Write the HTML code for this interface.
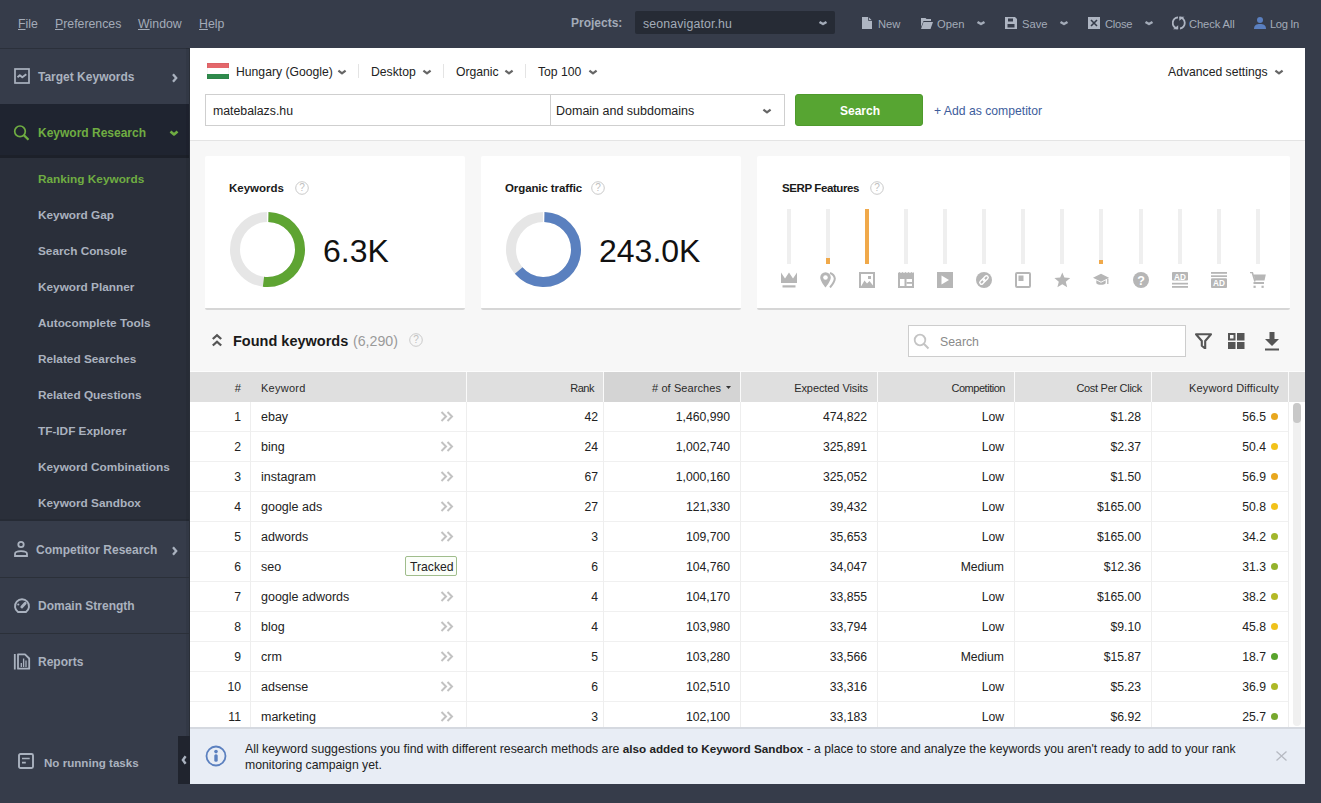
<!DOCTYPE html>
<html><head><meta charset="utf-8">
<style>
*{box-sizing:border-box;margin:0;padding:0}
html,body{width:1321px;height:803px;overflow:hidden;background:#363c4a;font-family:"Liberation Sans",sans-serif;position:relative}
.t{position:absolute;line-height:20px;white-space:nowrap}
.t u{text-decoration:underline;text-underline-offset:1px}
.r{position:absolute;display:block}
</style></head><body>
<div class='r' style='left:0px;top:0px;width:1321px;height:803px;background:#363c4a;'></div>
<div class='t ' style='left:18px;top:13.74px;font-size:12.3px;font-weight:400;color:#a3abb8;'><u>F</u>ile</div>
<div class='t ' style='left:55px;top:13.74px;font-size:12.3px;font-weight:400;color:#a3abb8;'><u>P</u>references</div>
<div class='t ' style='left:138px;top:13.74px;font-size:12.3px;font-weight:400;color:#a3abb8;'><u>W</u>indow</div>
<div class='t ' style='left:199px;top:13.74px;font-size:12.3px;font-weight:400;color:#a3abb8;'><u>H</u>elp</div>
<div class='t ' style='left:571px;top:12.84px;font-size:12px;font-weight:700;color:#a3abb8;'>Projects:</div>
<div class='r' style='left:635px;top:11px;width:200px;height:23px;background:#262b35;border-radius:2px'></div>
<div class='t ' style='left:643px;top:13.74px;font-size:12.3px;font-weight:400;color:#a3abb8;letter-spacing:0.15px'>seonavigator.hu</div>
<svg class='r' style='left:817.0px;top:17.0px;' width='12' height='12' viewBox='0 0 12 12'><polyline points='2.5,4.9 6.0,7.1 9.5,4.9' fill='none' stroke='#a3abb8' stroke-width='2.4' stroke-linejoin='round'/></svg>
<svg class='r' style='left:862px;top:17px;' width='10' height='12' viewBox='0 0 10 12'><path d='M0 0H6.5L10 3.5V12H0Z' fill='#aeb5c2'/><path d='M6.5 0V3.5H10' fill='none' stroke='#363c4a' stroke-width='0.8'/></svg>
<div class='t ' style='left:878px;top:14.12px;font-size:11.2px;font-weight:400;color:#a3abb8;'>New</div>
<svg class='r' style='left:921px;top:18px;' width='12' height='11' viewBox='0 0 12 11'><path d='M0 0H4.5L5.5 1H10V3H2.5L0 9Z' fill='#aeb5c2'/><path d='M2.5 4H12L9.5 11H0Z' fill='#aeb5c2'/></svg>
<div class='t ' style='left:937px;top:14.12px;font-size:11.2px;font-weight:400;color:#a3abb8;'>Open</div>
<svg class='r' style='left:975.0px;top:17.0px;' width='12' height='12' viewBox='0 0 12 12'><polyline points='2.5,4.9 6.0,7.1 9.5,4.9' fill='none' stroke='#a3abb8' stroke-width='2.4' stroke-linejoin='round'/></svg>
<svg class='r' style='left:1005px;top:17px;' width='12' height='12' viewBox='0 0 12 12'><path d='M0 0H10L12 2V12H0Z' fill='#aeb5c2'/><rect x='3' y='1.5' width='5' height='3' fill='#363c4a'/><rect x='2.5' y='7' width='7' height='3.5' fill='#363c4a'/></svg>
<div class='t ' style='left:1022px;top:14.12px;font-size:11.2px;font-weight:400;color:#a3abb8;'>Save</div>
<svg class='r' style='left:1058.0px;top:17.0px;' width='12' height='12' viewBox='0 0 12 12'><polyline points='2.5,4.9 6.0,7.1 9.5,4.9' fill='none' stroke='#a3abb8' stroke-width='2.4' stroke-linejoin='round'/></svg>
<svg class='r' style='left:1088px;top:17px;' width='12' height='12' viewBox='0 0 12 12'><rect width='12' height='12' fill='#aeb5c2'/><path d='M3 3L9 9M9 3L3 9' stroke='#363c4a' stroke-width='1.6'/></svg>
<div class='t ' style='left:1105px;top:14.12px;font-size:11.2px;font-weight:400;color:#a3abb8;letter-spacing:-0.3px'>Close</div>
<svg class='r' style='left:1143.0px;top:17.0px;' width='12' height='12' viewBox='0 0 12 12'><polyline points='2.5,4.9 6.0,7.1 9.5,4.9' fill='none' stroke='#a3abb8' stroke-width='2.4' stroke-linejoin='round'/></svg>
<svg class='r' style='left:1172px;top:16px;' width='14' height='14' viewBox='0 0 14 14'><path d='M6 1.5A5 5.5 0 0 0 5.5 12.5' fill='none' stroke='#aeb5c2' stroke-width='1.8'/><path d='M1 13.2H6.2V9.2Z' fill='#aeb5c2'/><path d='M7.5 1.5A5 5.5 0 0 1 8 12.5' fill='none' stroke='#aeb5c2' stroke-width='1.8'/><path d='M7.3 0.8H12.5L7.3 4.8Z' fill='#aeb5c2'/></svg>
<div class='t ' style='left:1189px;top:14.12px;font-size:11.2px;font-weight:400;color:#a3abb8;letter-spacing:-0.12px'>Check All</div>
<svg class='r' style='left:1254px;top:17px;' width='12' height='12' viewBox='0 0 12 12'><circle cx='6' cy='3' r='3' fill='#5a7fbf'/><path d='M0 12C0 8 2.5 7 6 7S12 8 12 12Z' fill='#5a7fbf'/></svg>
<div class='t ' style='left:1270px;top:14.12px;font-size:11.2px;font-weight:400;color:#a3abb8;letter-spacing:-0.4px'>Log In</div>
<div class='r' style='left:0px;top:48px;width:190px;height:755px;background:#363c4a;'></div>
<div class='r' style='left:0px;top:48px;width:189px;height:56px;background:#363c4a;'></div>
<div class='r' style='left:0px;top:104px;width:189px;height:51px;background:#1f2430;'></div>
<div class='r' style='left:0px;top:155px;width:189px;height:4px;background:#1c2029;'></div>
<div class='r' style='left:0px;top:158px;width:189px;height:362px;background:#2a2f3a;'></div>
<div class='r' style='left:0px;top:519px;width:189px;height:2px;background:#262b35;'></div>
<div class='r' style='left:0px;top:48px;width:189px;height:1px;background:#2b303b;'></div>
<div class='r' style='left:186px;top:48px;width:3px;height:736px;background:rgba(0,0,0,0.06);'></div>
<div class='r' style='left:189px;top:48px;width:1px;height:736px;background:#2a2f38;'></div>
<svg class='r' style='left:14px;top:68px;' width='16' height='16' viewBox='0 0 16 16'><rect x='1' y='1' width='14' height='14' fill='none' stroke='#aab2bf' stroke-width='1.7'/><polyline points='3.5,9.3 5.8,7.3 8.3,9.3 12.3,6.3' fill='none' stroke='#aab2bf' stroke-width='1.9' stroke-linejoin='round'/></svg>
<div class='t ' style='left:38px;top:66.84px;font-size:12px;font-weight:700;color:#aab2bf;'>Target Keywords</div>
<svg class='r' style='left:171px;top:73px;' width='7' height='10' viewBox='0 0 7 10'><polyline points='2,1.3 5.2,5 2,8.7' fill='none' stroke='#aab2bf' stroke-width='2.3'/></svg>
<svg class='r' style='left:13px;top:124px;' width='18' height='18' viewBox='0 0 18 18'><circle cx='7' cy='7.3' r='5.3' fill='none' stroke='#6fad42' stroke-width='1.7'/><path d='M10.8 11.1L15.5 15.8' stroke='#6fad42' stroke-width='2.2'/></svg>
<div class='t ' style='left:38px;top:122.84px;font-size:12px;font-weight:700;color:#6fad42;'>Keyword Research</div>
<svg class='r' style='left:168.0px;top:127.0px;' width='12' height='12' viewBox='0 0 12 12'><polyline points='2.5,4.5 6.0,7.5 9.5,4.5' fill='none' stroke='#6fad42' stroke-width='2.6' stroke-linejoin='round'/></svg>
<div class='t ' style='left:38px;top:168.91px;font-size:11.8px;font-weight:700;color:#6fad42;'>Ranking Keywords</div>
<div class='t ' style='left:38px;top:204.91px;font-size:11.8px;font-weight:700;color:#aab2bf;'>Keyword Gap</div>
<div class='t ' style='left:38px;top:240.91px;font-size:11.8px;font-weight:700;color:#aab2bf;'>Search Console</div>
<div class='t ' style='left:38px;top:276.91px;font-size:11.8px;font-weight:700;color:#aab2bf;'>Keyword Planner</div>
<div class='t ' style='left:38px;top:312.91px;font-size:11.8px;font-weight:700;color:#aab2bf;'>Autocomplete Tools</div>
<div class='t ' style='left:38px;top:348.91px;font-size:11.8px;font-weight:700;color:#aab2bf;'>Related Searches</div>
<div class='t ' style='left:38px;top:384.91px;font-size:11.8px;font-weight:700;color:#aab2bf;'>Related Questions</div>
<div class='t ' style='left:38px;top:420.91px;font-size:11.8px;font-weight:700;color:#aab2bf;'>TF-IDF Explorer</div>
<div class='t ' style='left:38px;top:456.91px;font-size:11.8px;font-weight:700;color:#aab2bf;'>Keyword Combinations</div>
<div class='t ' style='left:38px;top:492.91px;font-size:11.8px;font-weight:700;color:#aab2bf;'>Keyword Sandbox</div>
<div class='r' style='left:0px;top:577px;width:189px;height:1px;background:#2b3039;'></div>
<div class='r' style='left:0px;top:633px;width:189px;height:1px;background:#2b3039;'></div>
<svg class='r' style='left:13px;top:540px;' width='16' height='17' viewBox='0 0 16 17'><circle cx='8' cy='4.5' r='2.7' fill='none' stroke='#aab2bf' stroke-width='1.8'/><path d='M2 16V14C2 11.5 4.5 11.2 8 11.2S14 11.5 14 14V16Z' fill='none' stroke='#aab2bf' stroke-width='1.8'/></svg>
<div class='t ' style='left:36px;top:539.84px;font-size:12px;font-weight:700;color:#aab2bf;'>Competitor Research</div>
<svg class='r' style='left:171px;top:546px;' width='7' height='10' viewBox='0 0 7 10'><polyline points='2,1.3 5.2,5 2,8.7' fill='none' stroke='#aab2bf' stroke-width='2.3'/></svg>
<svg class='r' style='left:13px;top:597px;' width='18' height='17' viewBox='0 0 18 17'><path d='M5 15A7 7 0 1 1 13 15Z' fill='none' stroke='#aab2bf' stroke-width='1.9' stroke-linejoin='round'/><path d='M8.8 10L12.2 6.2' stroke='#aab2bf' stroke-width='2.8' stroke-linecap='round'/><circle cx='5.3' cy='7.5' r='1.1' fill='#aab2bf'/></svg>
<div class='t ' style='left:38px;top:595.84px;font-size:12px;font-weight:700;color:#aab2bf;'>Domain Strength</div>
<svg class='r' style='left:13px;top:653px;' width='18' height='17' viewBox='0 0 18 17'><path d='M1.8 1V16.5' stroke='#aab2bf' stroke-width='1.8'/><path d='M5 1.3H12L16.2 5.5V15.7H5Z' fill='none' stroke='#aab2bf' stroke-width='1.8' stroke-linejoin='round'/><path d='M8.3 14V10M10.6 14V5.5M13 14V7.5' stroke='#aab2bf' stroke-width='1.3'/></svg>
<div class='t ' style='left:38px;top:651.84px;font-size:12px;font-weight:700;color:#aab2bf;'>Reports</div>
<svg class='r' style='left:18px;top:753px;' width='16' height='16' viewBox='0 0 16 16'><rect x='1' y='1' width='14' height='14' rx='1.5' fill='none' stroke='#aab2bf' stroke-width='1.9'/><path d='M4 5.5H11.7M4 9.6H7.8' stroke='#aab2bf' stroke-width='1.7'/></svg>
<div class='t ' style='left:44px;top:752.98px;font-size:11.6px;font-weight:700;color:#aab2bf;'>No running tasks</div>
<div class='r' style='left:178px;top:736px;width:12px;height:48px;background:#20242e;'></div>
<svg class='r' style='left:181px;top:755px;' width='6' height='10' viewBox='0 0 6 10'><polyline points='4.6,1.2 1.9,5 4.6,8.8' fill='none' stroke='#aab2bf' stroke-width='2.4'/></svg>
<div class='r' style='left:190px;top:48px;width:1115px;height:736px;background:#f7f7f7;'></div>
<div class='r' style='left:190px;top:48px;width:1115px;height:93px;background:#ffffff;'></div>
<div class='r' style='left:190px;top:140px;width:1115px;height:1px;background:#e4e4e4;'></div>
<div class='r' style='left:207px;top:63px;width:22px;height:5px;background:#e4676b;'></div>
<div class='r' style='left:207px;top:68px;width:22px;height:6px;background:#ffffff;'></div>
<div class='r' style='left:207px;top:74px;width:22px;height:5px;background:#2f8a4c;'></div>
<div class='r' style='left:207px;top:63px;width:22px;height:16px;background:transparent;box-shadow:inset 0 0 0 0.5px rgba(0,0,0,.08)'></div>
<div class='t ' style='left:236px;top:61.77px;font-size:12.2px;font-weight:400;color:#222;'>Hungary (Google)</div>
<svg class='r' style='left:336.0px;top:66.0px;' width='12' height='12' viewBox='0 0 12 12'><polyline points='2.4,4.6 6.0,7.4 9.6,4.6' fill='none' stroke='#666' stroke-width='2.2' stroke-linejoin='round'/></svg>
<div class='r' style='left:358px;top:64px;width:1px;height:14px;background:#e4e4e4;'></div>
<div class='t ' style='left:371px;top:61.77px;font-size:12.2px;font-weight:400;color:#222;'>Desktop</div>
<svg class='r' style='left:421.0px;top:66.0px;' width='12' height='12' viewBox='0 0 12 12'><polyline points='2.4,4.6 6.0,7.4 9.6,4.6' fill='none' stroke='#666' stroke-width='2.2' stroke-linejoin='round'/></svg>
<div class='r' style='left:443px;top:64px;width:1px;height:14px;background:#e4e4e4;'></div>
<div class='t ' style='left:456px;top:61.77px;font-size:12.2px;font-weight:400;color:#222;'>Organic</div>
<svg class='r' style='left:503.0px;top:66.0px;' width='12' height='12' viewBox='0 0 12 12'><polyline points='2.4,4.6 6.0,7.4 9.6,4.6' fill='none' stroke='#666' stroke-width='2.2' stroke-linejoin='round'/></svg>
<div class='r' style='left:525px;top:64px;width:1px;height:14px;background:#e4e4e4;'></div>
<div class='t ' style='left:538px;top:61.77px;font-size:12.2px;font-weight:400;color:#222;'>Top 100</div>
<svg class='r' style='left:587.0px;top:66.0px;' width='12' height='12' viewBox='0 0 12 12'><polyline points='2.4,4.6 6.0,7.4 9.6,4.6' fill='none' stroke='#666' stroke-width='2.2' stroke-linejoin='round'/></svg>
<div class='t ' style='left:1168px;top:61.77px;font-size:12.2px;font-weight:400;color:#222;'>Advanced settings</div>
<svg class='r' style='left:1272.5px;top:66.0px;' width='12' height='12' viewBox='0 0 12 12'><polyline points='2.4,4.6 6.0,7.4 9.6,4.6' fill='none' stroke='#666' stroke-width='2.2' stroke-linejoin='round'/></svg>
<div class='r' style='left:205px;top:94px;width:346px;height:32px;background:#fff;border:1px solid #cfcfcf'></div>
<div class='t ' style='left:213px;top:100.74px;font-size:12.3px;font-weight:400;color:#222;'>matebalazs.hu</div>
<div class='r' style='left:550px;top:94px;width:235px;height:32px;background:#fff;border:1px solid #cfcfcf'></div>
<div class='t ' style='left:556px;top:100.67px;font-size:12.5px;font-weight:400;color:#222;'>Domain and subdomains</div>
<svg class='r' style='left:761.0px;top:105.0px;' width='12' height='12' viewBox='0 0 12 12'><polyline points='2.4,4.6 6.0,7.4 9.6,4.6' fill='none' stroke='#666' stroke-width='2.2' stroke-linejoin='round'/></svg>
<div class='r' style='left:795px;top:94px;width:128px;height:32px;background:#57a532;border-radius:3px;border:1px solid #4e9a2c'></div>
<div class='t ' style='left:840px;top:100.84px;font-size:12px;font-weight:700;color:#fff;'>Search</div>
<div class='t ' style='left:934px;top:100.77px;font-size:12.2px;font-weight:400;color:#3d5d9c;'>+ Add as competitor</div>
<div class='r' style='left:205px;top:156px;width:260px;height:154px;background:#fff;border-radius:2px;border-bottom:2px solid #d6d6d6'></div>
<div class='r' style='left:481px;top:156px;width:260px;height:154px;background:#fff;border-radius:2px;border-bottom:2px solid #d6d6d6'></div>
<div class='r' style='left:757px;top:156px;width:533px;height:154px;background:#fff;border-radius:2px;border-bottom:2px solid #d6d6d6'></div>
<div class='t ' style='left:229px;top:178.02px;font-size:11.5px;font-weight:700;color:#1a1a1a;'>Keywords</div>
<svg class='r' style='left:295px;top:181px;' width='14' height='14' viewBox='0 0 14 14'><circle cx='7.0' cy='7.0' r='6.3' fill='none' stroke='#c9c9c9' stroke-width='1'/><text x='7.0' y='10.14' text-anchor='middle' font-family='Liberation Sans' font-size='10.1' fill='#c0c0c0'>?</text></svg>
<div class='t ' style='left:505px;top:178.02px;font-size:11.5px;font-weight:700;color:#1a1a1a;letter-spacing:-0.1px'>Organic traffic</div>
<svg class='r' style='left:591px;top:181px;' width='14' height='14' viewBox='0 0 14 14'><circle cx='7.0' cy='7.0' r='6.3' fill='none' stroke='#c9c9c9' stroke-width='1'/><text x='7.0' y='10.14' text-anchor='middle' font-family='Liberation Sans' font-size='10.1' fill='#c0c0c0'>?</text></svg>
<div class='t ' style='left:782px;top:178.02px;font-size:11.5px;font-weight:700;color:#1a1a1a;letter-spacing:-0.4px'>SERP Features</div>
<svg class='r' style='left:870px;top:181px;' width='14' height='14' viewBox='0 0 14 14'><circle cx='7.0' cy='7.0' r='6.3' fill='none' stroke='#c9c9c9' stroke-width='1'/><text x='7.0' y='10.14' text-anchor='middle' font-family='Liberation Sans' font-size='10.1' fill='#c0c0c0'>?</text></svg>
<svg class='r' style='left:228.5px;top:211.0px;' width='77.0' height='77.0' viewBox='0 0 77.0 77.0'><g transform='translate(38.5,38.5) rotate(-90)'><circle r='32.5' fill='none' stroke='#e6e6e6' stroke-width='10'/><circle r='32.5' fill='none' stroke='#5ea432' stroke-width='10' stroke-dasharray='105.16 204.20' transform='rotate(1.5)'/><path d='M22.5,0H42.5' stroke='#fff' stroke-width='1.2'/></g></svg>
<svg class='r' style='left:505.0px;top:211.0px;' width='77.0' height='77.0' viewBox='0 0 77.0 77.0'><g transform='translate(38.5,38.5) rotate(-90)'><circle r='32.5' fill='none' stroke='#e6e6e6' stroke-width='10'/><circle r='32.5' fill='none' stroke='#5a80bf' stroke-width='10' stroke-dasharray='129.26 204.20' transform='rotate(1.5)'/><path d='M22.5,0H42.5' stroke='#fff' stroke-width='1.2'/></g></svg>
<div class='t ' style='left:323px;top:240.91px;font-size:32px;font-weight:400;color:#111;'>6.3K</div>
<div class='t ' style='left:599px;top:240.91px;font-size:32px;font-weight:400;color:#111;'>243.0K</div>
<div class='r' style='left:787px;top:209px;width:4px;height:55px;background:#efefef;'></div>
<div class='r' style='left:826px;top:209px;width:4px;height:55px;background:#efefef;'></div>
<div class='r' style='left:865px;top:209px;width:4px;height:55px;background:#efefef;'></div>
<div class='r' style='left:904px;top:209px;width:4px;height:55px;background:#efefef;'></div>
<div class='r' style='left:943px;top:209px;width:4px;height:55px;background:#efefef;'></div>
<div class='r' style='left:982px;top:209px;width:4px;height:55px;background:#efefef;'></div>
<div class='r' style='left:1021px;top:209px;width:4px;height:55px;background:#efefef;'></div>
<div class='r' style='left:1060px;top:209px;width:4px;height:55px;background:#efefef;'></div>
<div class='r' style='left:1099px;top:209px;width:4px;height:55px;background:#efefef;'></div>
<div class='r' style='left:1139px;top:209px;width:4px;height:55px;background:#efefef;'></div>
<div class='r' style='left:1178px;top:209px;width:4px;height:55px;background:#efefef;'></div>
<div class='r' style='left:1217px;top:209px;width:4px;height:55px;background:#efefef;'></div>
<div class='r' style='left:1256px;top:209px;width:4px;height:55px;background:#efefef;'></div>
<div class='r' style='left:826px;top:258px;width:4px;height:6px;background:#f0a94a;'></div>
<div class='r' style='left:865px;top:209px;width:4px;height:55px;background:#f0a94a;'></div>
<div class='r' style='left:1099px;top:260px;width:4px;height:4px;background:#f0a94a;'></div>
<svg class='r' style='left:781px;top:272px;' width='16' height='16' viewBox='0 0 16 16'><path d='M0 0.5L4 6.5L8 0.5L12 6.5L16 0.5V11H0Z' fill='#b6b6b6'/><rect x='1.5' y='13.3' width='13' height='2.2' fill='#b6b6b6'/></svg>
<svg class='r' style='left:820px;top:272px;' width='16' height='16' viewBox='0 0 16 16'><path d='M5.5 0.3A5.3 5.3 0 0 0 0.2 5.6C0.2 9.3 5.5 15.6 5.5 15.6S10.8 9.3 10.8 5.6A5.3 5.3 0 0 0 5.5 0.3Z' fill='#b6b6b6'/><circle cx='5.5' cy='5.5' r='2.3' fill='#fff'/><path d='M10 1A7 7 0 0 1 14.8 6.5C14.8 9.5 12.5 12.5 10 15.5' fill='none' stroke='#b6b6b6' stroke-width='2'/></svg>
<svg class='r' style='left:859px;top:272px;' width='16' height='16' viewBox='0 0 16 16'><rect x='1' y='1' width='14' height='14' fill='none' stroke='#b6b6b6' stroke-width='2'/><path d='M2 14.5L5.5 8.5L8 11.5L10.5 9L14 13.5V14.5Z' fill='#b6b6b6'/><rect x='9' y='4' width='3' height='3' fill='#b6b6b6'/></svg>
<svg class='r' style='left:898px;top:272px;' width='16' height='16' viewBox='0 0 16 16'><path d='M0 1L1.5 0L3 1L4.5 0L6 1L7.5 0L9 1L10.5 0L12 1L13.5 0L15 1L16 0V16H0Z' fill='#b6b6b6'/><rect x='2' y='5' width='12' height='9' fill='#fff'/><rect x='2' y='5' width='12' height='2' fill='#b6b6b6'/><rect x='6.5' y='7' width='2' height='7' fill='#b6b6b6'/><rect x='8.5' y='10' width='5.5' height='1.8' fill='#b6b6b6'/></svg>
<svg class='r' style='left:937px;top:272px;' width='16' height='16' viewBox='0 0 16 16'><rect x='0' y='0' width='16' height='16' fill='#b6b6b6'/><path d='M4.5 3.5L12 8L4.5 12.5Z' fill='#fff'/></svg>
<svg class='r' style='left:976px;top:272px;' width='16' height='16' viewBox='0 0 16 16'><circle cx='8' cy='8' r='8' fill='#b6b6b6'/><g transform='rotate(-45 8 8)' fill='none' stroke='#fff' stroke-width='1.4'><rect x='2.8' y='6.3' width='6' height='3.4' rx='1.7'/><rect x='7.2' y='6.3' width='6' height='3.4' rx='1.7'/></g></svg>
<svg class='r' style='left:1015px;top:272px;' width='16' height='16' viewBox='0 0 16 16'><rect x='1' y='1' width='14' height='14' rx='1' fill='none' stroke='#b6b6b6' stroke-width='2'/><rect x='3.5' y='3.5' width='5' height='5.5' fill='#b6b6b6'/></svg>
<svg class='r' style='left:1054px;top:272px;' width='16' height='16' viewBox='0 0 16 16'><path d='M8.3 0.5L10.4 5.6L16.2 6L11.8 9.7L13.2 15.3L8.3 12.3L3.4 15.3L4.8 9.7L0.4 6L6.2 5.6Z' fill='#b6b6b6'/></svg>
<svg class='r' style='left:1093px;top:272px;' width='16' height='16' viewBox='0 0 16 16'><path d='M8 1.8L16 5.8L8 9.8L0 5.8Z' fill='#b6b6b6'/><path d='M3.3 8.3V11.3C5 13.3 11 13.3 12.7 11.3V8.3L8 10.8Z' fill='#b6b6b6'/><path d='M14.8 6.5V12' stroke='#b6b6b6' stroke-width='1.3'/></svg>
<svg class='r' style='left:1133px;top:272px;' width='16' height='16' viewBox='0 0 16 16'><circle cx='8' cy='8' r='8' fill='#b6b6b6'/><text x='8' y='12.8' text-anchor='middle' font-family='Liberation Sans' font-weight='bold' font-size='12.5' fill='#fff'>?</text></svg>
<svg class='r' style='left:1172px;top:272px;' width='16' height='16' viewBox='0 0 16 16'><rect x='0' y='0' width='16' height='8.5' rx='1' fill='#b6b6b6'/><text x='8' y='7.6' text-anchor='middle' font-family='Liberation Sans' font-weight='bold' font-size='8.2' fill='#fff'>AD</text><rect x='0' y='10.8' width='16' height='1.7' fill='#b6b6b6'/><rect x='0' y='14' width='16' height='1.8' fill='#b6b6b6'/></svg>
<svg class='r' style='left:1211px;top:272px;' width='16' height='16' viewBox='0 0 16 16'><rect x='0' y='0' width='16' height='1.8' fill='#b6b6b6'/><rect x='0' y='3.3' width='16' height='1.7' fill='#b6b6b6'/><rect x='0' y='6.3' width='16' height='9.7' rx='1' fill='#b6b6b6'/><text x='8' y='14.3' text-anchor='middle' font-family='Liberation Sans' font-weight='bold' font-size='8.2' fill='#fff'>AD</text></svg>
<svg class='r' style='left:1250px;top:272px;' width='16' height='16' viewBox='0 0 16 16'><path d='M0 0.5L2.3 0.5L5 9.5' fill='none' stroke='#b6b6b6' stroke-width='1.6'/><path d='M3.6 2.5H15.8L14.5 8.5H5.2Z' fill='#b6b6b6'/><rect x='3.5' y='10' width='10.5' height='2' fill='#b6b6b6'/><rect x='3.5' y='13.7' width='2.2' height='2.2' fill='#b6b6b6'/><rect x='11.5' y='13.7' width='2.2' height='2.2' fill='#b6b6b6'/></svg>
<svg class='r' style='left:211px;top:333px;' width='12' height='15' viewBox='0 0 12 15'><polyline points='1.8,6 6,2.2 10.2,6' fill='none' stroke='#555' stroke-width='2.3'/><polyline points='1.8,12.5 6,8.7 10.2,12.5' fill='none' stroke='#555' stroke-width='2.3'/></svg>
<div class='t ' style='left:233px;top:330.98px;font-size:14.5px;font-weight:700;color:#1a1a1a;'>Found keywords</div>
<div class='t ' style='left:353px;top:331.08px;font-size:14.2px;font-weight:400;color:#9a9a9a;'>(6,290)</div>
<svg class='r' style='left:409px;top:333px;' width='14' height='14' viewBox='0 0 14 14'><circle cx='7.0' cy='7.0' r='6.3' fill='none' stroke='#c9c9c9' stroke-width='1'/><text x='7.0' y='10.14' text-anchor='middle' font-family='Liberation Sans' font-size='10.1' fill='#c0c0c0'>?</text></svg>
<div class='r' style='left:908px;top:325px;width:278px;height:32px;background:#fff;border:1px solid #cdcdcd'></div>
<svg class='r' style='left:913px;top:333px;' width='18' height='17' viewBox='0 0 18 17'><circle cx='7' cy='7' r='5.3' fill='none' stroke='#c4c4c4' stroke-width='1.8'/><path d='M10.8 10.8L15.5 15.5' stroke='#c4c4c4' stroke-width='2'/></svg>
<div class='t ' style='left:940px;top:331.74px;font-size:12.3px;font-weight:400;color:#8a8a8a;'>Search</div>
<svg class='r' style='left:1195px;top:333px;' width='17' height='16' viewBox='0 0 17 16'><path d='M1 1.2H16L10.2 8V15.5L6.8 12.8V8Z' fill='none' stroke='#555' stroke-width='2.1' stroke-linejoin='round'/></svg>
<svg class='r' style='left:1228px;top:333px;' width='17' height='16' viewBox='0 0 17 16'><rect x='1' y='1' width='5.5' height='5.5' fill='none' stroke='#555' stroke-width='2'/><rect x='9' y='0' width='7.5' height='7.5' fill='#555'/><rect x='0' y='9' width='7.5' height='7.5' fill='#555'/><rect x='9' y='9' width='7.5' height='7.5' fill='#555'/></svg>
<svg class='r' style='left:1264px;top:332px;' width='17' height='19' viewBox='0 0 17 19'><path d='M5.5 0H10.5V7H15L8 14L1 7H5.5Z' fill='#555'/><rect x='1' y='16.5' width='14' height='2' fill='#555'/></svg>
<div class='r' style='left:190px;top:371px;width:1115px;height:1px;background:#fdfdfd;'></div>
<div class='r' style='left:190px;top:372px;width:1115px;height:30px;background:#dfdfdf;'></div>
<div class='r' style='left:603px;top:372px;width:137px;height:30px;background:#d4d4d4;'></div>
<div class='r' style='left:466px;top:372px;width:1px;height:30px;background:#fafafa;'></div>
<div class='r' style='left:603px;top:372px;width:1px;height:30px;background:#fafafa;'></div>
<div class='r' style='left:740px;top:372px;width:1px;height:30px;background:#fafafa;'></div>
<div class='r' style='left:877px;top:372px;width:1px;height:30px;background:#fafafa;'></div>
<div class='r' style='left:1014px;top:372px;width:1px;height:30px;background:#fafafa;'></div>
<div class='r' style='left:1151px;top:372px;width:1px;height:30px;background:#fafafa;'></div>
<div class='r' style='left:1288px;top:372px;width:1px;height:30px;background:#fafafa;'></div>
<div class='r' style='left:1289px;top:372px;width:16px;height:30px;background:#dfdfdf;'></div>
<div class='t ' style='right:1080px;top:378.12px;font-size:11.2px;font-weight:400;color:#2b2b2b;'>#</div>
<div class='t ' style='left:261px;top:378.19px;font-size:11px;font-weight:400;color:#2b2b2b;letter-spacing:0.25px'>Keyword</div>
<div class='t ' style='right:727px;top:378.19px;font-size:11px;font-weight:400;color:#2b2b2b;letter-spacing:-0.5px'>Rank</div>
<div class='t ' style='right:600px;top:378.19px;font-size:11px;font-weight:400;color:#2b2b2b;letter-spacing:0.08px'># of Searches</div>
<svg class='r' style='left:726px;top:386px;' width='5' height='3' viewBox='0 0 5 3'><path d='M0 0H5L2.5 3Z' fill='#333'/></svg>
<div class='t ' style='right:453px;top:378.19px;font-size:11px;font-weight:400;color:#2b2b2b;letter-spacing:-0.08px'>Expected Visits</div>
<div class='t ' style='right:316px;top:378.19px;font-size:11px;font-weight:400;color:#2b2b2b;letter-spacing:-0.47px'>Competition</div>
<div class='t ' style='right:179px;top:378.19px;font-size:11px;font-weight:400;color:#2b2b2b;letter-spacing:-0.29px'>Cost Per Click</div>
<div class='t ' style='right:42px;top:378.19px;font-size:11px;font-weight:400;color:#2b2b2b;letter-spacing:0.15px'>Keyword Difficulty</div>
<div class='r' style='left:190px;top:402px;width:1115px;height:326px;background:#fff;'></div>
<div class='r' style='left:190px;top:431px;width:1099px;height:1px;background:#f0f0f0;'></div>
<div class='t ' style='right:1080px;top:406.77px;font-size:12.2px;font-weight:400;color:#222;'>1</div>
<div class='t ' style='left:261px;top:406.67px;font-size:12.5px;font-weight:400;color:#222;'>ebay</div>
<svg class='r' style='left:440px;top:411px;' width='14' height='12' viewBox='0 0 14 12'><polyline points='1.5,1 6,5.5 1.5,10' fill='none' stroke='#c2c2c2' stroke-width='2'/><polyline points='7.5,1 12,5.5 7.5,10' fill='none' stroke='#c2c2c2' stroke-width='2'/></svg>
<div class='t ' style='right:723px;top:406.77px;font-size:12.2px;font-weight:400;color:#222;'>42</div>
<div class='t ' style='right:591px;top:406.77px;font-size:12.2px;font-weight:400;color:#222;'>1,460,990</div>
<div class='t ' style='right:454px;top:406.77px;font-size:12.2px;font-weight:400;color:#222;'>474,822</div>
<div class='t ' style='right:317px;top:406.77px;font-size:12.2px;font-weight:400;color:#222;'>Low</div>
<div class='t ' style='right:180px;top:406.77px;font-size:12.2px;font-weight:400;color:#222;'>$1.28</div>
<div class='t ' style='right:55px;top:406.77px;font-size:12.2px;font-weight:400;color:#222;'>56.5</div>
<div class='r' style='left:1271px;top:413px;width:7px;height:7px;border-radius:50%;background:#e8a71e'></div>
<div class='r' style='left:190px;top:461px;width:1099px;height:1px;background:#f0f0f0;'></div>
<div class='t ' style='right:1080px;top:436.77px;font-size:12.2px;font-weight:400;color:#222;'>2</div>
<div class='t ' style='left:261px;top:436.67px;font-size:12.5px;font-weight:400;color:#222;'>bing</div>
<svg class='r' style='left:440px;top:441px;' width='14' height='12' viewBox='0 0 14 12'><polyline points='1.5,1 6,5.5 1.5,10' fill='none' stroke='#c2c2c2' stroke-width='2'/><polyline points='7.5,1 12,5.5 7.5,10' fill='none' stroke='#c2c2c2' stroke-width='2'/></svg>
<div class='t ' style='right:723px;top:436.77px;font-size:12.2px;font-weight:400;color:#222;'>24</div>
<div class='t ' style='right:591px;top:436.77px;font-size:12.2px;font-weight:400;color:#222;'>1,002,740</div>
<div class='t ' style='right:454px;top:436.77px;font-size:12.2px;font-weight:400;color:#222;'>325,891</div>
<div class='t ' style='right:317px;top:436.77px;font-size:12.2px;font-weight:400;color:#222;'>Low</div>
<div class='t ' style='right:180px;top:436.77px;font-size:12.2px;font-weight:400;color:#222;'>$2.37</div>
<div class='t ' style='right:55px;top:436.77px;font-size:12.2px;font-weight:400;color:#222;'>50.4</div>
<div class='r' style='left:1271px;top:443px;width:7px;height:7px;border-radius:50%;background:#f2c21a'></div>
<div class='r' style='left:190px;top:491px;width:1099px;height:1px;background:#f0f0f0;'></div>
<div class='t ' style='right:1080px;top:466.77px;font-size:12.2px;font-weight:400;color:#222;'>3</div>
<div class='t ' style='left:261px;top:466.67px;font-size:12.5px;font-weight:400;color:#222;'>instagram</div>
<svg class='r' style='left:440px;top:471px;' width='14' height='12' viewBox='0 0 14 12'><polyline points='1.5,1 6,5.5 1.5,10' fill='none' stroke='#c2c2c2' stroke-width='2'/><polyline points='7.5,1 12,5.5 7.5,10' fill='none' stroke='#c2c2c2' stroke-width='2'/></svg>
<div class='t ' style='right:723px;top:466.77px;font-size:12.2px;font-weight:400;color:#222;'>67</div>
<div class='t ' style='right:591px;top:466.77px;font-size:12.2px;font-weight:400;color:#222;'>1,000,160</div>
<div class='t ' style='right:454px;top:466.77px;font-size:12.2px;font-weight:400;color:#222;'>325,052</div>
<div class='t ' style='right:317px;top:466.77px;font-size:12.2px;font-weight:400;color:#222;'>Low</div>
<div class='t ' style='right:180px;top:466.77px;font-size:12.2px;font-weight:400;color:#222;'>$1.50</div>
<div class='t ' style='right:55px;top:466.77px;font-size:12.2px;font-weight:400;color:#222;'>56.9</div>
<div class='r' style='left:1271px;top:473px;width:7px;height:7px;border-radius:50%;background:#e8a71e'></div>
<div class='r' style='left:190px;top:521px;width:1099px;height:1px;background:#f0f0f0;'></div>
<div class='t ' style='right:1080px;top:496.77px;font-size:12.2px;font-weight:400;color:#222;'>4</div>
<div class='t ' style='left:261px;top:496.67px;font-size:12.5px;font-weight:400;color:#222;'>google ads</div>
<svg class='r' style='left:440px;top:501px;' width='14' height='12' viewBox='0 0 14 12'><polyline points='1.5,1 6,5.5 1.5,10' fill='none' stroke='#c2c2c2' stroke-width='2'/><polyline points='7.5,1 12,5.5 7.5,10' fill='none' stroke='#c2c2c2' stroke-width='2'/></svg>
<div class='t ' style='right:723px;top:496.77px;font-size:12.2px;font-weight:400;color:#222;'>27</div>
<div class='t ' style='right:591px;top:496.77px;font-size:12.2px;font-weight:400;color:#222;'>121,330</div>
<div class='t ' style='right:454px;top:496.77px;font-size:12.2px;font-weight:400;color:#222;'>39,432</div>
<div class='t ' style='right:317px;top:496.77px;font-size:12.2px;font-weight:400;color:#222;'>Low</div>
<div class='t ' style='right:180px;top:496.77px;font-size:12.2px;font-weight:400;color:#222;'>$165.00</div>
<div class='t ' style='right:55px;top:496.77px;font-size:12.2px;font-weight:400;color:#222;'>50.8</div>
<div class='r' style='left:1271px;top:503px;width:7px;height:7px;border-radius:50%;background:#f2c21a'></div>
<div class='r' style='left:190px;top:551px;width:1099px;height:1px;background:#f0f0f0;'></div>
<div class='t ' style='right:1080px;top:526.77px;font-size:12.2px;font-weight:400;color:#222;'>5</div>
<div class='t ' style='left:261px;top:526.67px;font-size:12.5px;font-weight:400;color:#222;'>adwords</div>
<svg class='r' style='left:440px;top:531px;' width='14' height='12' viewBox='0 0 14 12'><polyline points='1.5,1 6,5.5 1.5,10' fill='none' stroke='#c2c2c2' stroke-width='2'/><polyline points='7.5,1 12,5.5 7.5,10' fill='none' stroke='#c2c2c2' stroke-width='2'/></svg>
<div class='t ' style='right:723px;top:526.77px;font-size:12.2px;font-weight:400;color:#222;'>3</div>
<div class='t ' style='right:591px;top:526.77px;font-size:12.2px;font-weight:400;color:#222;'>109,700</div>
<div class='t ' style='right:454px;top:526.77px;font-size:12.2px;font-weight:400;color:#222;'>35,653</div>
<div class='t ' style='right:317px;top:526.77px;font-size:12.2px;font-weight:400;color:#222;'>Low</div>
<div class='t ' style='right:180px;top:526.77px;font-size:12.2px;font-weight:400;color:#222;'>$165.00</div>
<div class='t ' style='right:55px;top:526.77px;font-size:12.2px;font-weight:400;color:#222;'>34.2</div>
<div class='r' style='left:1271px;top:533px;width:7px;height:7px;border-radius:50%;background:#a2b62c'></div>
<div class='r' style='left:190px;top:581px;width:1099px;height:1px;background:#f0f0f0;'></div>
<div class='t ' style='right:1080px;top:556.77px;font-size:12.2px;font-weight:400;color:#222;'>6</div>
<div class='t ' style='left:261px;top:556.67px;font-size:12.5px;font-weight:400;color:#222;'>seo</div>
<div class='r' style='left:405px;top:556px;width:52px;height:20px;background:#fbfef9;border:1px solid #a0bd8c;border-radius:2px'></div>
<div class='t ' style='left:410px;top:556.77px;font-size:12.2px;font-weight:400;color:#222;'>Tracked</div>
<div class='t ' style='right:723px;top:556.77px;font-size:12.2px;font-weight:400;color:#222;'>6</div>
<div class='t ' style='right:591px;top:556.77px;font-size:12.2px;font-weight:400;color:#222;'>104,760</div>
<div class='t ' style='right:454px;top:556.77px;font-size:12.2px;font-weight:400;color:#222;'>34,047</div>
<div class='t ' style='right:317px;top:556.77px;font-size:12.2px;font-weight:400;color:#222;'>Medium</div>
<div class='t ' style='right:180px;top:556.77px;font-size:12.2px;font-weight:400;color:#222;'>$12.36</div>
<div class='t ' style='right:55px;top:556.77px;font-size:12.2px;font-weight:400;color:#222;'>31.3</div>
<div class='r' style='left:1271px;top:563px;width:7px;height:7px;border-radius:50%;background:#94b22c'></div>
<div class='r' style='left:190px;top:611px;width:1099px;height:1px;background:#f0f0f0;'></div>
<div class='t ' style='right:1080px;top:586.77px;font-size:12.2px;font-weight:400;color:#222;'>7</div>
<div class='t ' style='left:261px;top:586.67px;font-size:12.5px;font-weight:400;color:#222;'>google adwords</div>
<svg class='r' style='left:440px;top:591px;' width='14' height='12' viewBox='0 0 14 12'><polyline points='1.5,1 6,5.5 1.5,10' fill='none' stroke='#c2c2c2' stroke-width='2'/><polyline points='7.5,1 12,5.5 7.5,10' fill='none' stroke='#c2c2c2' stroke-width='2'/></svg>
<div class='t ' style='right:723px;top:586.77px;font-size:12.2px;font-weight:400;color:#222;'>4</div>
<div class='t ' style='right:591px;top:586.77px;font-size:12.2px;font-weight:400;color:#222;'>104,170</div>
<div class='t ' style='right:454px;top:586.77px;font-size:12.2px;font-weight:400;color:#222;'>33,855</div>
<div class='t ' style='right:317px;top:586.77px;font-size:12.2px;font-weight:400;color:#222;'>Low</div>
<div class='t ' style='right:180px;top:586.77px;font-size:12.2px;font-weight:400;color:#222;'>$165.00</div>
<div class='t ' style='right:55px;top:586.77px;font-size:12.2px;font-weight:400;color:#222;'>38.2</div>
<div class='r' style='left:1271px;top:593px;width:7px;height:7px;border-radius:50%;background:#b4b926'></div>
<div class='r' style='left:190px;top:641px;width:1099px;height:1px;background:#f0f0f0;'></div>
<div class='t ' style='right:1080px;top:616.77px;font-size:12.2px;font-weight:400;color:#222;'>8</div>
<div class='t ' style='left:261px;top:616.67px;font-size:12.5px;font-weight:400;color:#222;'>blog</div>
<svg class='r' style='left:440px;top:621px;' width='14' height='12' viewBox='0 0 14 12'><polyline points='1.5,1 6,5.5 1.5,10' fill='none' stroke='#c2c2c2' stroke-width='2'/><polyline points='7.5,1 12,5.5 7.5,10' fill='none' stroke='#c2c2c2' stroke-width='2'/></svg>
<div class='t ' style='right:723px;top:616.77px;font-size:12.2px;font-weight:400;color:#222;'>4</div>
<div class='t ' style='right:591px;top:616.77px;font-size:12.2px;font-weight:400;color:#222;'>103,980</div>
<div class='t ' style='right:454px;top:616.77px;font-size:12.2px;font-weight:400;color:#222;'>33,794</div>
<div class='t ' style='right:317px;top:616.77px;font-size:12.2px;font-weight:400;color:#222;'>Low</div>
<div class='t ' style='right:180px;top:616.77px;font-size:12.2px;font-weight:400;color:#222;'>$9.10</div>
<div class='t ' style='right:55px;top:616.77px;font-size:12.2px;font-weight:400;color:#222;'>45.8</div>
<div class='r' style='left:1271px;top:623px;width:7px;height:7px;border-radius:50%;background:#efc21c'></div>
<div class='r' style='left:190px;top:671px;width:1099px;height:1px;background:#f0f0f0;'></div>
<div class='t ' style='right:1080px;top:646.77px;font-size:12.2px;font-weight:400;color:#222;'>9</div>
<div class='t ' style='left:261px;top:646.67px;font-size:12.5px;font-weight:400;color:#222;'>crm</div>
<svg class='r' style='left:440px;top:651px;' width='14' height='12' viewBox='0 0 14 12'><polyline points='1.5,1 6,5.5 1.5,10' fill='none' stroke='#c2c2c2' stroke-width='2'/><polyline points='7.5,1 12,5.5 7.5,10' fill='none' stroke='#c2c2c2' stroke-width='2'/></svg>
<div class='t ' style='right:723px;top:646.77px;font-size:12.2px;font-weight:400;color:#222;'>5</div>
<div class='t ' style='right:591px;top:646.77px;font-size:12.2px;font-weight:400;color:#222;'>103,280</div>
<div class='t ' style='right:454px;top:646.77px;font-size:12.2px;font-weight:400;color:#222;'>33,566</div>
<div class='t ' style='right:317px;top:646.77px;font-size:12.2px;font-weight:400;color:#222;'>Medium</div>
<div class='t ' style='right:180px;top:646.77px;font-size:12.2px;font-weight:400;color:#222;'>$15.87</div>
<div class='t ' style='right:55px;top:646.77px;font-size:12.2px;font-weight:400;color:#222;'>18.7</div>
<div class='r' style='left:1271px;top:653px;width:7px;height:7px;border-radius:50%;background:#58a32c'></div>
<div class='r' style='left:190px;top:701px;width:1099px;height:1px;background:#f0f0f0;'></div>
<div class='t ' style='right:1080px;top:676.77px;font-size:12.2px;font-weight:400;color:#222;'>10</div>
<div class='t ' style='left:261px;top:676.67px;font-size:12.5px;font-weight:400;color:#222;'>adsense</div>
<svg class='r' style='left:440px;top:681px;' width='14' height='12' viewBox='0 0 14 12'><polyline points='1.5,1 6,5.5 1.5,10' fill='none' stroke='#c2c2c2' stroke-width='2'/><polyline points='7.5,1 12,5.5 7.5,10' fill='none' stroke='#c2c2c2' stroke-width='2'/></svg>
<div class='t ' style='right:723px;top:676.77px;font-size:12.2px;font-weight:400;color:#222;'>6</div>
<div class='t ' style='right:591px;top:676.77px;font-size:12.2px;font-weight:400;color:#222;'>102,510</div>
<div class='t ' style='right:454px;top:676.77px;font-size:12.2px;font-weight:400;color:#222;'>33,316</div>
<div class='t ' style='right:317px;top:676.77px;font-size:12.2px;font-weight:400;color:#222;'>Low</div>
<div class='t ' style='right:180px;top:676.77px;font-size:12.2px;font-weight:400;color:#222;'>$5.23</div>
<div class='t ' style='right:55px;top:676.77px;font-size:12.2px;font-weight:400;color:#222;'>36.9</div>
<div class='r' style='left:1271px;top:683px;width:7px;height:7px;border-radius:50%;background:#adb826'></div>
<div class='r' style='left:190px;top:731px;width:1099px;height:1px;background:#f0f0f0;'></div>
<div class='t ' style='right:1080px;top:706.77px;font-size:12.2px;font-weight:400;color:#222;'>11</div>
<div class='t ' style='left:261px;top:706.67px;font-size:12.5px;font-weight:400;color:#222;'>marketing</div>
<svg class='r' style='left:440px;top:711px;' width='14' height='12' viewBox='0 0 14 12'><polyline points='1.5,1 6,5.5 1.5,10' fill='none' stroke='#c2c2c2' stroke-width='2'/><polyline points='7.5,1 12,5.5 7.5,10' fill='none' stroke='#c2c2c2' stroke-width='2'/></svg>
<div class='t ' style='right:723px;top:706.77px;font-size:12.2px;font-weight:400;color:#222;'>3</div>
<div class='t ' style='right:591px;top:706.77px;font-size:12.2px;font-weight:400;color:#222;'>102,100</div>
<div class='t ' style='right:454px;top:706.77px;font-size:12.2px;font-weight:400;color:#222;'>33,183</div>
<div class='t ' style='right:317px;top:706.77px;font-size:12.2px;font-weight:400;color:#222;'>Low</div>
<div class='t ' style='right:180px;top:706.77px;font-size:12.2px;font-weight:400;color:#222;'>$6.92</div>
<div class='t ' style='right:55px;top:706.77px;font-size:12.2px;font-weight:400;color:#222;'>25.7</div>
<div class='r' style='left:1271px;top:713px;width:7px;height:7px;border-radius:50%;background:#77a82e'></div>
<div class='r' style='left:250px;top:402px;width:1px;height:326px;background:#eeeeee;'></div>
<div class='r' style='left:466px;top:402px;width:1px;height:326px;background:#eeeeee;'></div>
<div class='r' style='left:603px;top:402px;width:1px;height:326px;background:#eeeeee;'></div>
<div class='r' style='left:740px;top:402px;width:1px;height:326px;background:#eeeeee;'></div>
<div class='r' style='left:877px;top:402px;width:1px;height:326px;background:#eeeeee;'></div>
<div class='r' style='left:1014px;top:402px;width:1px;height:326px;background:#eeeeee;'></div>
<div class='r' style='left:1151px;top:402px;width:1px;height:326px;background:#eeeeee;'></div>
<div class='r' style='left:1288px;top:402px;width:1px;height:326px;background:#eeeeee;'></div>
<div class='r' style='left:1289px;top:402px;width:16px;height:326px;background:#fff;'></div>
<div class='r' style='left:1293px;top:403px;width:8px;height:323px;background:#f0f0f0;border-radius:4px'></div>
<div class='r' style='left:1293px;top:403px;width:8px;height:20px;background:#c8c8c8;border-radius:4px'></div>
<div class='r' style='left:190px;top:727px;width:1115px;height:2px;background:#d5d9e0;'></div>
<div class='r' style='left:190px;top:729px;width:1115px;height:55px;background:#e8edf5;'></div>
<svg class='r' style='left:205px;top:745px;' width='22' height='22' viewBox='0 0 22 22'><circle cx='11' cy='11' r='9.5' fill='none' stroke='#5b80bf' stroke-width='1.8'/><circle cx='11' cy='6.6' r='1.8' fill='#5b80bf'/><rect x='9.3' y='9.2' width='3.4' height='7.6' rx='1.5' fill='#5b80bf'/></svg>
<div class='t ' style='left:245px;top:738.74px;font-size:12.3px;font-weight:400;color:#222;'>All keyword suggestions you find with different research methods are <b style="font-size:11.7px">also added to Keyword Sandbox</b><span style="font-size:12.15px"> - a place to store and analyze the keywords you aren&#39;t ready to add to your rank</span></div>
<div class='t ' style='left:245px;top:754.76px;font-size:12.25px;font-weight:400;color:#222;'>monitoring campaign yet.</div>
<svg class='r' style='left:1275.5px;top:751px;' width='11' height='10' viewBox='0 0 11 10'><path d='M0.5 0.5L10.5 9.5M10.5 0.5L0.5 9.5' stroke='#b6bac2' stroke-width='1.3'/></svg>
</body></html>
